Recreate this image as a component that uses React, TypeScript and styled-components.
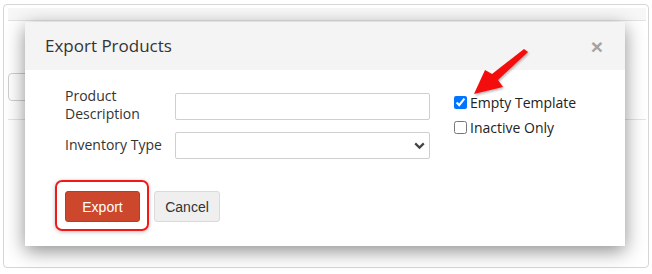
import React from "react";
import styled, { createGlobalStyle } from "styled-components";

const GlobalStyle = createGlobalStyle`
  html, body {
    margin: 0;
    padding: 0;
    background: #fff;
  }
  body {
    font-family: "Open Sans", "Noto Sans", sans-serif;
    color: #333;
  }
`;

const Page = styled.div`
  position: relative;
  width: 652px;
  height: 274px;
  padding: 4px 0 0 3px;
  box-sizing: border-box;
  overflow: hidden;
`;

const Frame = styled.div`
  width: 646px;
  height: 264px;
  box-sizing: border-box;
  border: 1px solid #d6d6d6;
  border-radius: 4px;
  padding: 3px 2px 0 4px;
`;

const TopStrip = styled.div`
  height: 12px;
  background: #f7f7f7;
  border-bottom: 1px solid #e2e2e2;
`;

const Toolbar = styled.div`
  display: flex;
  align-items: flex-start;
  height: 99px;
  padding-top: 52px;
  box-sizing: border-box;
  border-bottom: 1px solid #e4e4e4;
`;

const GhostButton = styled.div`
  width: 40px;
  height: 28px;
  box-sizing: border-box;
  border: 1px solid #cfcfcf;
  border-radius: 4px;
  background: #fff;
`;

const Modal = styled.div`
  position: absolute;
  left: 25px;
  top: 22px;
  width: 600px;
  height: 224px;
  background: #fff;
  box-shadow: 0 5px 18px rgba(0, 0, 0, 0.45);
  display: flex;
  flex-direction: column;
`;

const ModalHeader = styled.div`
  height: 48px;
  flex: none;
  display: flex;
  align-items: center;
  justify-content: space-between;
  padding: 0 20px;
  background: #f5f4f5;
`;

const Title = styled.h4`
  margin: -2px 0 0;
  font-size: 17px;
  font-weight: 400;
  color: #333;
`;

const Close = styled.span`
  font-family: "Liberation Sans", Arial, sans-serif;
  font-size: 21px;
  font-weight: 700;
  color: #a3a3a3;
  line-height: 1;
  margin-right: 2px;
`;

const ModalBody = styled.div`
  display: flex;
  flex-direction: column;
  padding: 19px 0 0 40px;
`;

const FormArea = styled.div`
  display: flex;
  align-items: flex-start;
`;

const FieldGrid = styled.div`
  display: grid;
  grid-template-columns: 110px 255px;
  row-gap: 9px;
  align-items: center;
`;

const Label = styled.label`
  font-size: 14px;
  line-height: 18px;
  color: #333;
  width: 105px;
  margin-top: -2px;
`;

const TextInput = styled.input`
  width: 255px;
  height: 27px;
  box-sizing: border-box;
  border: 1px solid #cfcfcf;
  border-radius: 2px;
  padding: 0 6px;
  font-size: 14px;
  outline: none;
`;

const SelectWrap = styled.div`
  position: relative;
  width: 255px;
  height: 27px;
`;

const Select = styled.select`
  appearance: none;
  width: 100%;
  height: 100%;
  box-sizing: border-box;
  border: 1px solid #cfcfcf;
  border-radius: 2px;
  background: #fff;
  font-size: 14px;
  outline: none;
`;

const Chevron = styled.svg`
  position: absolute;
  right: 5px;
  top: 10px;
  pointer-events: none;
`;

const Checks = styled.div`
  display: flex;
  flex-direction: column;
  gap: 6px;
  margin-left: 24px;
  margin-top: 4px;
`;

const CheckRow = styled.label`
  display: flex;
  align-items: center;
  font-size: 14px;
  line-height: 19px;
  color: #222;
`;

const Check = styled.input`
  width: 13px;
  height: 13px;
  margin: 0 3px 0 0;
`;

const Actions = styled.div`
  display: flex;
  gap: 14px;
  margin-top: 32px;
`;

const Highlight = styled.span`
  position: relative;
  display: inline-flex;
  &::after {
    content: "";
    position: absolute;
    left: -10px;
    top: -11px;
    right: -9px;
    bottom: -9px;
    border: 2px solid #f01818;
    border-radius: 7px;
    box-shadow: 0 1px 4px rgba(0, 0, 0, 0.25);
  }
`;

const Button = styled.button<{ $primary?: boolean }>`
  height: 31px;
  width: ${(p) => (p.$primary ? "75px" : "66px")};
  padding: 0;
  box-sizing: border-box;
  font-family: "Liberation Sans", Arial, sans-serif;
  font-size: 14px;
  border-radius: 3px;
  border: 1px solid ${(p) => (p.$primary ? "#b73e24" : "#dadada")};
  background: ${(p) => (p.$primary ? "#cc472b" : "#efefef")};
  color: ${(p) => (p.$primary ? "#fff" : "#333")};
`;

const Arrow = styled.svg`
  position: absolute;
  left: 460px;
  top: 40px;
  overflow: visible;
`;

export default function App() {
  return (
    <>
      <GlobalStyle />
      <Page>
        <Frame>
          <TopStrip />
          <Toolbar>
            <GhostButton />
          </Toolbar>
        </Frame>

        <Modal>
          <ModalHeader>
            <Title>Export Products</Title>
            <Close>×</Close>
          </ModalHeader>
          <ModalBody>
            <FormArea>
              <FieldGrid>
                <Label>Product Description</Label>
                <TextInput type="text" />
                <Label>Inventory Type</Label>
                <SelectWrap>
                  <Select defaultValue="">
                    <option value=""></option>
                  </Select>
                  <Chevron width="11" height="8" viewBox="0 0 11 8">
                    <path d="M1.2 1.4 L5.5 5.6 L9.8 1.4" fill="none" stroke="#444" strokeWidth="2.2" />
                  </Chevron>
                </SelectWrap>
              </FieldGrid>
              <Checks>
                <CheckRow>
                  <Check type="checkbox" defaultChecked />
                  Empty Template
                </CheckRow>
                <CheckRow>
                  <Check type="checkbox" />
                  Inactive Only
                </CheckRow>
              </Checks>
            </FormArea>
            <Actions>
              <Highlight>
                <Button $primary>Export</Button>
              </Highlight>
              <Button>Cancel</Button>
            </Actions>
          </ModalBody>
        </Modal>

        <Arrow width="80" height="60" viewBox="0 0 80 60">
          <defs>
            <filter id="arrowShadow" x="-20%" y="-20%" width="140%" height="140%">
              <feDropShadow dx="1" dy="1.5" stdDeviation="1.2" floodColor="#000" floodOpacity="0.3" />
            </filter>
          </defs>
          <polygon
            points="14,54 25,30 32,34 64,9 68,12 38,40 43,47"
            fill="#f40c0c"
            filter="url(#arrowShadow)"
          />
        </Arrow>
      </Page>
    </>
  );
}
